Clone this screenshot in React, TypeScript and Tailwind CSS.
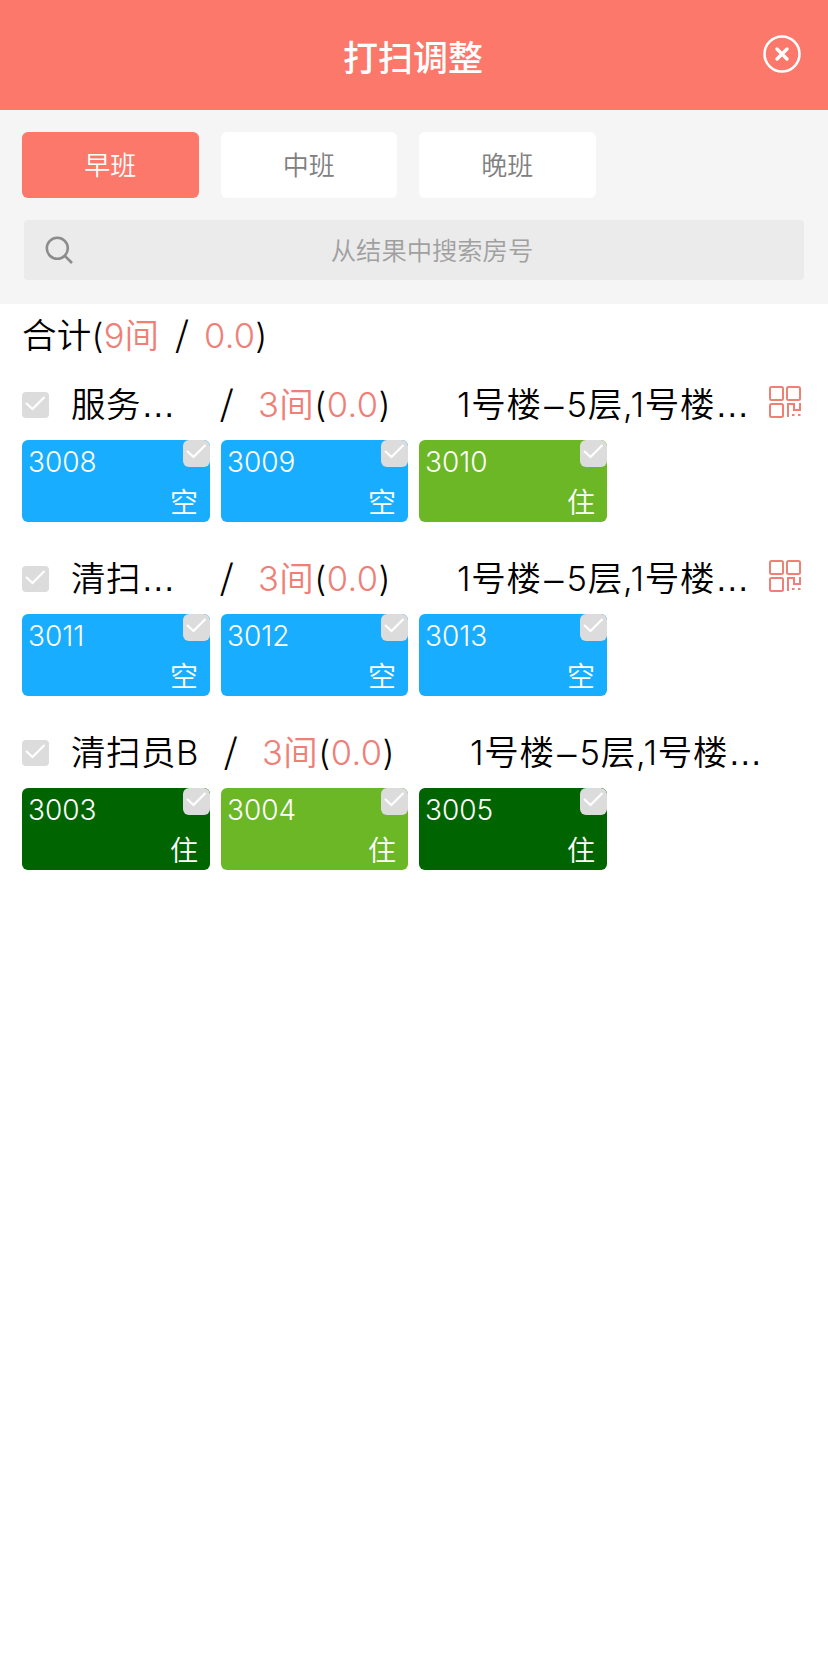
import clsx from "clsx";

type RoomStatus = "vacant" | "occupied" | "occupiedDirty";

interface Room {
  no: string;
  status: RoomStatus;
}

interface Cleaner {
  name: string;
  count: string;
  score: string;
  area: string;
  hasQr: boolean;
  rooms: Room[];
}

const shifts = ["早班", "中班", "晚班"];

const statusColors: Record<RoomStatus, string> = {
  vacant: "bg-[#18adff]",
  occupied: "bg-[#6bb725]",
  occupiedDirty: "bg-[#006400]",
};

const statusLabels: Record<RoomStatus, string> = {
  vacant: "空",
  occupied: "住",
  occupiedDirty: "住",
};

const cleaners: Cleaner[] = [
  {
    name: "服务…",
    count: "3间",
    score: "0.0",
    area: "1号楼–5层,1号楼…",
    hasQr: true,
    rooms: [
      { no: "3008", status: "vacant" },
      { no: "3009", status: "vacant" },
      { no: "3010", status: "occupied" },
    ],
  },
  {
    name: "清扫…",
    count: "3间",
    score: "0.0",
    area: "1号楼–5层,1号楼…",
    hasQr: true,
    rooms: [
      { no: "3011", status: "vacant" },
      { no: "3012", status: "vacant" },
      { no: "3013", status: "vacant" },
    ],
  },
  {
    name: "清扫员B",
    count: "3间",
    score: "0.0",
    area: "1号楼–5层,1号楼…",
    hasQr: false,
    rooms: [
      { no: "3003", status: "occupiedDirty" },
      { no: "3004", status: "occupied" },
      { no: "3005", status: "occupiedDirty" },
    ],
  },
];

// Dashes and ellipses are set a little wider than the surrounding text
const Label = ({ text }: { text: string }) => (
  <>
    {text.split(/([–…])/).map((part, i) =>
      part === "–" || part === "…" ? (
        <span
          key={i}
          className={clsx("font-['Liberation_Sans',sans-serif]", part === "–" && "mx-[2.5px]")}
        >
          {part}
        </span>
      ) : (
        part
      )
    )}
  </>
);

const CheckBox = ({ className }: { className?: string }) => (
  <span className={clsx("block w-[27px] shrink-0 bg-[#dcdcdc]", className)}>
    <svg viewBox="0 0 27 26" className="h-[26px] w-[27px]" fill="none" stroke="#fff" strokeWidth="2.2">
      <path d="M4 11 L10.5 17 L22.5 5" />
    </svg>
  </span>
);

const QrIcon = () => (
  <svg viewBox="0 0 32 32" className="h-8 w-8" fill="none" stroke="#ee8076" strokeWidth="2">
    <rect x="1" y="1" width="13" height="13" rx="1.5" />
    <rect x="18" y="1" width="13" height="13" rx="1.5" />
    <rect x="1" y="18" width="13" height="13" rx="1.5" />
    <path d="M19 31 V18 H25 V24 H31 V17" />
    <path d="M23 29 H25.5 M29 29 H31.5" />
  </svg>
);

const RoomCard = ({ room }: { room: Room }) => (
  <div
    className={clsx(
      "relative h-[82px] overflow-hidden rounded-md text-[28px] text-white",
      statusColors[room.status]
    )}
  >
    <span className="absolute left-[6px] top-[2px] leading-10">{room.no}</span>
    <CheckBox className="absolute right-0 top-0 h-[27px] rounded-md" />
    <span className="absolute right-3 top-[43px] leading-10">{statusLabels[room.status]}</span>
  </div>
);

const CleanerGroup = ({ cleaner }: { cleaner: Cleaner }) => (
  <section className="mb-5">
    <div className="flex h-[72px] items-center whitespace-nowrap pt-0.5 text-[34.5px]">
      <CheckBox className="h-[26px] rounded" />
      <span
        className={clsx("ml-[22px] tracking-[0.5px]", cleaner.hasQr ? "w-[149px]" : "w-[153px]")}
      >
        <Label text={cleaner.name} />
      </span>
      <span className="w-[38px] pb-1.5 font-['Noto_Sans_CJK_SC',sans-serif] font-normal">/</span>
      <span className={clsx("tracking-[0.4px]", cleaner.hasQr ? "w-[199px]" : "w-[208px]")}>
        <span className="text-[#ee8078]">{cleaner.count}</span>(
        <span className="text-[#ee8078]">{cleaner.score}</span>)
      </span>
      <span className="w-[312px] tracking-[0.7px]">
        <Label text={cleaner.area} />
      </span>
      {cleaner.hasQr && (
        <span className="-mt-1.5">
          <QrIcon />
        </span>
      )}
    </div>
    <div className="grid grid-cols-[188px_187px_188px] gap-[11px]">
      {cleaner.rooms.map((room) => (
        <RoomCard key={room.no} room={room} />
      ))}
    </div>
  </section>
);

export default function App() {
  return (
    <div className="min-h-screen bg-white font-['Inter','Noto_Sans_CJK_SC',sans-serif] font-[350] text-black">
      {/* Header */}
      <header className="relative flex h-[110px] items-center justify-center bg-[#fb786a]">
        <h1 className="pr-0.5 pt-1.5 text-[35px] font-medium text-white">打扫调整</h1>
        <svg
          viewBox="0 0 38 38"
          className="absolute right-[27px] top-[35px] h-[38px] w-[38px]"
          fill="none"
          stroke="#fff"
        >
          <circle cx="19" cy="19" r="17.5" strokeWidth="2.6" />
          <path d="M14 14 L24 24 M24 14 L14 24" strokeWidth="3.4" strokeLinecap="round" />
        </svg>
      </header>

      {/* Shift tabs + search */}
      <div className="h-[194px] bg-[#f5f5f5] px-[22px] pt-[22px]">
        <div className="flex gap-[22px]">
          {shifts.map((shift, i) => (
            <button
              key={shift}
              className={clsx(
                "h-[66px] w-[176.5px] rounded-md text-[26px]",
                i === 0 ? "bg-[#fb786a] text-white" : "bg-white text-[#808080]"
              )}
            >
              {shift}
            </button>
          ))}
        </div>
        <div className="mx-0.5 mt-[22px] flex h-[60px] items-center rounded bg-[#ebebeb]">
          <svg
            viewBox="0 0 28 28"
            className="ml-[21px] h-7 w-7 shrink-0"
            fill="none"
            stroke="#8c8c8c"
            strokeWidth="2.6"
          >
            <circle cx="12.3" cy="12.3" r="10.5" />
            <path d="M19.8 19.8 L27 27" />
          </svg>
          <span className="flex-1 pr-[13px] pt-px text-center text-[25.3px] text-[#a0a0a0]">
            从结果中搜索房号
          </span>
        </div>
      </div>

      {/* Totals */}
      <main className="px-[22px]">
        <div className="flex h-16 items-center whitespace-pre text-[34.5px] tracking-[0.2px]">
          合计(<span className="text-[#ee8078]">9间</span>
          <span className="ml-4 mr-[15px] pb-1.5 font-['Noto_Sans_CJK_SC',sans-serif] font-normal">
            /
          </span>
          <span className="text-[#ee8078]">0.0</span>)
        </div>
        {cleaners.map((cleaner) => (
          <CleanerGroup key={cleaner.name} cleaner={cleaner} />
        ))}
      </main>
    </div>
  );
}
